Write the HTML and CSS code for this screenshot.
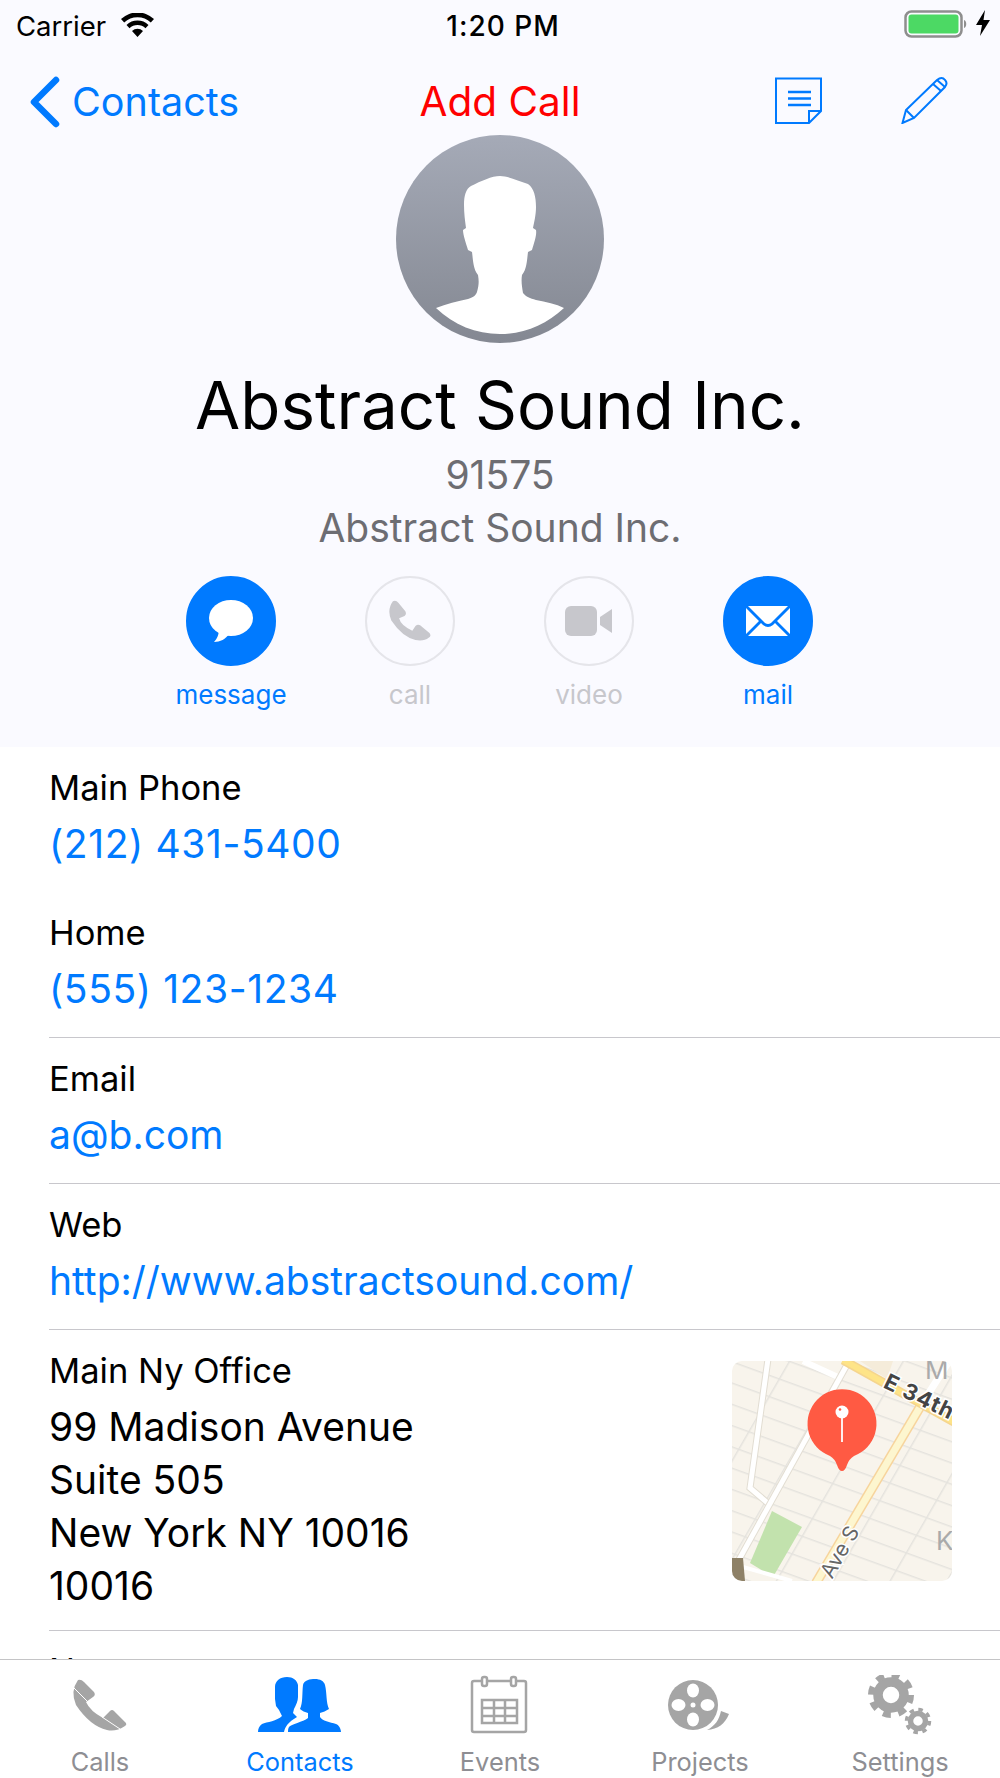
FILE: index.html
```html
<!DOCTYPE html>
<html>
<head>
    <title>Contact</title>
    <link rel="stylesheet" href="styles.css">
</head>
<body>
<div class="app">
    <div class="scroll">
        <div class="head">
            <div class="status">
                <div class="status-left">
                    <span>Carrier</span>
                    <svg class="wifi" width="33" height="24" viewBox="0 0 33 24">
                        <path d="M16.5 24 L11 18 A8 8 0 0 1 22 18 Z M8.5 15.3 L5.5 12 A16 16 0 0 1 27.5 12 L24.5 15.3 A11.5 11.5 0 0 0 8.5 15.3 Z M3.2 9.5 L0 6 A24 24 0 0 1 33 6 L29.8 9.5 A19.5 19.5 0 0 0 3.2 9.5 Z" fill="#000"/>
                    </svg>
                </div>
                <div class="time">1:20 PM</div>
                <div class="status-right">
                    <svg width="65" height="28" viewBox="0 0 65 28">
                        <rect x="1.5" y="1.5" width="56" height="25" rx="6" fill="none" stroke="#8e8e8e" stroke-width="2.5"/>
                        <rect x="4.5" y="4.5" width="50" height="19" rx="3" fill="#4cd964"/>
                        <path d="M60 10 C63 11 63 17 60 18 Z" fill="#8e8e8e"/>
                    </svg>
                    <svg width="14" height="26" viewBox="0 0 14 26">
                        <path d="M9 0 L0 15 H6 L4 26 L14 10 H7.5 Z" fill="#000"/>
                    </svg>
                </div>
            </div>
            <div class="nav">
                <div class="nav-back">
                    <svg width="32" height="52" viewBox="0 0 32 52">
                        <polyline points="27,4 5,26 27,48" fill="none" stroke="#007aff" stroke-width="6.5" stroke-linecap="round" stroke-linejoin="round"/>
                    </svg>
                    <span>Contacts</span>
                </div>
                <div class="nav-title">Add Call</div>
                <div class="nav-icons">
                    <svg width="47" height="47" viewBox="0 0 47 47" fill="none" stroke="#007aff" stroke-width="2">
                        <path d="M1 1.5 H46 V34 L34 46 H1 Z"/>
                        <path d="M34 46 V34 H46"/>
                        <path d="M13 15 H36 M13 21.5 H36 M13 28 H36" stroke-width="2.5"/>
                    </svg>
                    <svg width="47" height="47" viewBox="0 0 47 47" fill="none" stroke="#007aff" stroke-width="2">
                        <path d="M1.5 46 L5 33 L36 3 Q41 -1 44 3 Q47 6 44 10 L13 41 Z"/>
                        <path d="M5 33 L13 41 M32 7 L40 14 M36 3 L44 10"/>
                    </svg>
                </div>
            </div>
            <div class="profile">
                <svg class="avatar" width="208" height="208" viewBox="0 0 208 208">
                    <defs>
                        <linearGradient id="avatarFill" x1="0" y1="0" x2="0" y2="1">
                            <stop offset="0" stop-color="#a5aab7"/>
                            <stop offset="1" stop-color="#848892"/>
                        </linearGradient>
                    </defs>
                    <circle cx="104" cy="104" r="104" fill="url(#avatarFill)"/>
                    <path d="M104 41 C112 41 122 46 132 49 C138 53 140 62 140 72 C140 80 138 88 137 93 L140 95 C141 100 138 108 136 115 L132 117 C131 124 131 134 126 140 C125 146 126 152 127 158 C130 162 134 163 140 165 C150 167 160 169 168 173 C150 190 128 199 104 199 C80 199 58 190 40 173 C50 169 62 166 72 164 C78 162 80 160 81 157 C83 150 83 146 82 140 C77 134 77 124 76 117 L72 115 C70 108 67 100 67 95 L70 93 C69 86 68 78 68 70 C68 60 70 54 75 51 C85 46 96 41 104 41 Z" fill="#fff"/>
                </svg>
                <div class="name">Abstract Sound Inc.</div>
                <div class="sub">91575</div>
                <div class="sub">Abstract Sound Inc.</div>
            </div>
            <div class="actions">
                <div class="action on">
                    <div class="action-icon">
                        <svg width="50" height="46" viewBox="0 0 50 46">
                            <ellipse cx="25" cy="20" rx="22" ry="18" fill="#fff"/>
                            <path d="M13 30 C13 37 11 41 8 44 C14 44 20 41 23 36 Z" fill="#fff"/>
                        </svg>
                    </div>
                    <div class="action-label">message</div>
                </div>
                <div class="action">
                    <div class="action-icon">
                        <svg width="42" height="42" viewBox="23 5 54 51">
                            <path d="M28 5 Q32 3 35 7 L44 18 Q46 22 43 24 L36 27 Q38 36 53 43 L57 37 Q60 34 63 36 L75 46 Q78 50 74 52 Q68 57 57 55 Q40 51 26 30 Q20 16 28 5 Z" fill="#c7c7cc"/>
                        </svg>
                    </div>
                    <div class="action-label">call</div>
                </div>
                <div class="action">
                    <div class="action-icon">
                        <svg width="48" height="30" viewBox="0 0 48 30">
                            <rect x="0" y="0" width="32" height="30" rx="6" fill="#c7c7cc"/>
                            <path d="M35 11 L47 3 V27 L35 19 Z" fill="#c7c7cc"/>
                        </svg>
                    </div>
                    <div class="action-label">video</div>
                </div>
                <div class="action on">
                    <div class="action-icon">
                        <svg width="44" height="30" viewBox="0 0 44 30" fill="#fff">
                            <path d="M2 0 H42 L25 17 Q22 19 19 17 Z"/>
                            <path d="M0 2 L13 15 L0 28 Z M44 2 L31 15 L44 28 Z"/>
                            <path d="M2 30 L15 17 L17 19 Q22 23 27 19 L29 17 L42 30 Z"/>
                        </svg>
                    </div>
                    <div class="action-label">mail</div>
                </div>
            </div>
        </div>

        <div class="list">
            <div class="row no-line">
                <div class="row-text">
                    <div class="row-label">Main Phone</div>
                    <div class="row-value link phone">(212) 431-5400</div>
                </div>
            </div>
            <div class="row">
                <div class="row-text">
                    <div class="row-label">Home</div>
                    <div class="row-value link phone">(555) 123-1234</div>
                </div>
            </div>
            <div class="row">
                <div class="row-text">
                    <div class="row-label">Email</div>
                    <div class="row-value link">a@b.com</div>
                </div>
            </div>
            <div class="row">
                <div class="row-text">
                    <div class="row-label">Web</div>
                    <div class="row-value link">http://www.abstractsound.com/</div>
                </div>
            </div>
            <div class="row address">
                <div class="row-text">
                    <div class="row-label">Main Ny Office</div>
                    <div class="row-value">99 Madison Avenue</div>
                    <div class="row-value">Suite 505</div>
                    <div class="row-value">New York NY 10016</div>
                    <div class="row-value">10016</div>
                </div>
                <svg class="map" width="220" height="220" viewBox="0 0 220 220">
                    <defs>
                        <pattern id="streets" width="50" height="20" patternUnits="userSpaceOnUse" patternTransform="rotate(20) skewX(-10)">
                            <path d="M0 0 H50 M0 0 V20" stroke="#e5e3de" stroke-width="3" fill="none"/>
                        </pattern>
                    </defs>
                    <rect width="220" height="220" fill="#f8f4ec"/>
                    <rect width="220" height="220" fill="url(#streets)"/>
                    <polygon points="128,0 161,0 155,18" fill="#f5ecda"/>
                    <polygon points="40,150 70,166 41,216 18,202" fill="#c2e2ad"/>
                    <polyline points="36,-2 18,127 38,144" fill="none" stroke="#e2ddd2" stroke-width="7"/>
                    <polyline points="36,-2 18,127 38,144" fill="none" stroke="#fff" stroke-width="5"/>
                    <line x1="71" y1="0" x2="108" y2="17" stroke="#fff" stroke-width="6"/>
                    <line x1="4" y1="204" x2="116" y2="2" stroke="#e2ddd2" stroke-width="7"/>
                    <line x1="4" y1="204" x2="116" y2="2" stroke="#fff" stroke-width="5"/>
                    <line x1="4" y1="204" x2="60" y2="220" stroke="#fff" stroke-width="4"/>
                    <line x1="191" y1="41" x2="225" y2="-12" stroke="#fff" stroke-width="7"/>
                    <line x1="84" y1="222" x2="191" y2="41" stroke="#f7d49c" stroke-width="10"/>
                    <line x1="84" y1="222" x2="191" y2="41" stroke="#fdf6cf" stroke-width="7"/>
                    <line x1="111" y1="-1" x2="222" y2="61" stroke="#f5d58e" stroke-width="9"/>
                    <line x1="111" y1="-1" x2="222" y2="61" stroke="#fee488" stroke-width="6"/>
                    <polygon points="0,197 11,197 13,220 0,220" fill="#8e8167"/>
                    <text class="map-road" x="188" y="42" text-anchor="middle" transform="rotate(26 185 34)">E 34th</text>
                    <text class="map-ave" x="108" y="198" text-anchor="middle" transform="rotate(-60 108 191)">Ave S</text>
                    <text class="map-poi" x="193" y="18">M</text>
                    <text class="map-poi" x="204" y="189">K</text>
                    <path d="M110 110 Q107 110 105 104 Q103 98 98 95 A34.5 34.5 0 1 1 122 95 Q117 98 115 104 Q113 110 110 110 Z" fill="#ff5a43"/>
                    <line x1="110" y1="52" x2="110" y2="81" stroke="#fff" stroke-width="1.8"/>
                    <circle cx="110" cy="51" r="6.5" fill="#fff"/>
                    <circle cx="108" cy="48.5" r="1.3" fill="#ff5a43"/>
                </svg>
            </div>
            <div class="row notes">
                <div class="row-text">
                    <div class="row-label">Notes</div>
                </div>
            </div>
        </div>
    </div>

    <div class="tabs">
        <div class="tab">
            <svg width="100" height="60" viewBox="0 0 100 60">
                <path d="M28 5 Q31 4 34 7 L44 17 Q46 20 43 22 L36 27 Q40 36 53 43 L60 36 Q62 34 64 36 L76 48 Q77 50 75 51 Q66 57 57 55 Q40 51 26 30 Q20 16 28 5 Z" fill="#a5a5a5"/>
                <path d="M24 13 L38 27 M52 42 L70 54" stroke="#fff" stroke-width="1" fill="none"/>
            </svg>
            <div class="tab-label">Calls</div>
        </div>
        <div class="tab active">
            <svg width="100" height="60" viewBox="0 0 100 60" fill="#007aff">
                <path d="M37 2 C30 2 25 6 25 12 L25 24 L26 31 L29 35 L32 41 C27 46 17 47 12 49 C9 51 8 54 8 57 H34 C35 52 38 47 47 42 L43 38 L44 34 C46 30 48 26 48 22 L48 10 C47 5 43 2 37 2 Z"/>
                <path d="M65 4 C60 4 54 5 53 10 C52 18 53 28 50 34 C52 36 55 37 58 38 L58 43 C53 47 41 49 39 52 C38 54 38 55 38 57 H91 C91 54 89 50 86 49 C80 47 72 46 70 42 L70 38 C73 37 76 36 79 34 C76 28 77 18 75 10 C74 6 70 4 65 4 Z"/>
            </svg>
            <div class="tab-label">Contacts</div>
        </div>
        <div class="tab">
            <svg width="100" height="60" viewBox="0 0 100 60" fill="none" stroke="#a5a5a5" stroke-width="2.5">
                <rect x="22" y="6" width="54" height="51" rx="2"/>
                <rect x="32" y="2" width="5" height="9" rx="2" fill="#fff"/>
                <rect x="61" y="2" width="5" height="9" rx="2" fill="#fff"/>
                <path d="M32 25 H67 V48 H32 Z M32 33 H67 M32 41 H67 M44 25 V48 M55 25 V48"/>
            </svg>
            <div class="tab-label">Events</div>
        </div>
        <div class="tab">
            <svg width="100" height="60" viewBox="0 0 100 60">
                <circle cx="43" cy="30" r="25" fill="#a5a5a5"/>
                <ellipse cx="43" cy="15.5" rx="6" ry="7" fill="#fff"/>
                <ellipse cx="43" cy="44.5" rx="6" ry="7" fill="#fff"/>
                <ellipse cx="28.5" cy="30" rx="7" ry="6" fill="#fff"/>
                <ellipse cx="57.5" cy="30" rx="7" ry="6" fill="#fff"/>
                <circle cx="43" cy="30" r="2.5" fill="#fff"/>
                <path d="M71 36 L79 39 C75 49 68 54 57 55 C65 51 69 45 71 36 Z" fill="#a5a5a5"/>
            </svg>
            <div class="tab-label">Projects</div>
        </div>
        <div class="tab">
            <svg width="100" height="60" viewBox="0 0 100 60" fill="none" stroke="#a5a5a5">
                <circle cx="41" cy="20" r="13" stroke-width="9.5"/>
                <circle cx="41" cy="20" r="20" stroke-width="6" stroke-dasharray="8 7.7"/>
                <circle cx="68" cy="46" r="7.5" stroke-width="5.5"/>
                <circle cx="68" cy="46" r="11.5" stroke-width="3.5" stroke-dasharray="4.5 4.53"/>
            </svg>
            <div class="tab-label">Settings</div>
        </div>
    </div>
</div>
</body>
</html>
```

FILE: styles.css
```css
* {
    box-sizing: border-box;
}

body {
    margin: 0;
    background-color: #fff;
    color: #000;
    font-family: Inter, "Liberation Sans", sans-serif;
}

.app {
    width: 1000px;
    height: 1778px;
    display: flex;
    flex-direction: column;
    overflow: hidden;
}

.scroll {
    flex: 1;
    min-height: 0;
    overflow: hidden;
}

.head {
    height: 747px;
    background-color: #fafaff;
}

/* status bar */
.status {
    height: 47px;
    padding: 10px 10px 0 16px;
    display: grid;
    grid-template-columns: 1fr auto 1fr;
    font-size: 27.5px;
}

.status-left {
    display: flex;
    align-items: flex-start;
    gap: 15px;
    line-height: 32px;
}

.wifi {
    margin-top: 3px;
}

.time {
    font-size: 28px;
    font-weight: 500;
    letter-spacing: 1px;
    line-height: 32px;
}

.status-right {
    display: flex;
    justify-content: flex-end;
    align-items: flex-start;
    gap: 7px;
}

/* nav bar */
.nav {
    height: 88px;
    padding: 30px 28px 0 28px;
    display: grid;
    grid-template-columns: 1fr auto 1fr;
}

.nav-back {
    display: flex;
    align-items: center;
    gap: 11px;
    height: 50px;
    padding-left: 1px;
    color: #007aff;
    font-size: 39.5px;
}

.nav-title {
    color: #f00;
    font-size: 40.5px;
    line-height: 50px;
}

.nav-icons {
    display: flex;
    justify-content: flex-end;
    gap: 79px;
    padding-right: 24px;
}

/* avatar and name */
.profile {
    display: flex;
    flex-direction: column;
    align-items: center;
}

.avatar {
    display: block;
}

.name {
    margin-top: 20px;
    font-size: 65.5px;
    line-height: 85px;
}

.sub {
    color: #6d6d72;
    font-size: 39px;
    line-height: 53px;
}

/* action buttons */
.actions {
    margin: 22px 0 0 186px;
    width: 627px;
    display: flex;
    justify-content: space-between;
}

.action {
    width: 90px;
    display: flex;
    flex-direction: column;
    align-items: center;
    color: #c7c7cc;
}

.action.on {
    color: #007aff;
}

.action-icon {
    flex: none;
    width: 90px;
    height: 90px;
    border-radius: 50%;
    border: 2px solid #e5e5ea;
    display: flex;
    align-items: center;
    justify-content: center;
}

.action.on .action-icon {
    background-color: #007aff;
    border-color: #007aff;
}

.action-label {
    margin-top: 13px;
    font-size: 26px;
    line-height: 32px;
    white-space: nowrap;
}

/* list rows */
.list {
    background-color: #fff;
}

.row {
    margin-left: 49px;
    padding: 21px 48px 22px 0;
    display: flex;
    justify-content: space-between;
    align-items: flex-start;
    border-bottom: 1px solid #c8c7cc;
}

.row.no-line {
    border-bottom: none;
}

.row.address {
    padding-bottom: 18px;
}

.row.notes {
    padding-top: 20px;
}

.row-label {
    font-size: 34.5px;
    line-height: 40px;
    margin-bottom: 9px;
}

.row-value {
    font-size: 39px;
    line-height: 53px;
}

.link {
    color: #007aff;
}

.phone {
    letter-spacing: 0.6px;
}

.map {
    display: block;
    margin-top: 10px;
    border-radius: 10px;
}

.map-road {
    font-size: 22px;
    font-weight: 700;
    letter-spacing: 1px;
    fill: #444;
    stroke: #fff;
    stroke-width: 3px;
    paint-order: stroke;
}

.map-ave {
    font-size: 21px;
    fill: #666;
    stroke: #fff;
    stroke-width: 3px;
    paint-order: stroke;
}

.map-poi {
    font-size: 26px;
    fill: #aaa;
}

/* tab bar */
.tabs {
    height: 119px;
    padding-top: 15px;
    display: flex;
    background-color: #fff;
    border-top: 1px solid #c4c4c6;
}

.tab {
    width: 200px;
    display: flex;
    flex-direction: column;
    align-items: center;
    color: #8e8e93;
}

.tab.active {
    color: #007aff;
}

.tab-label {
    margin-top: 11px;
    font-size: 25.4px;
    line-height: 32px;
    white-space: nowrap;
}
```
